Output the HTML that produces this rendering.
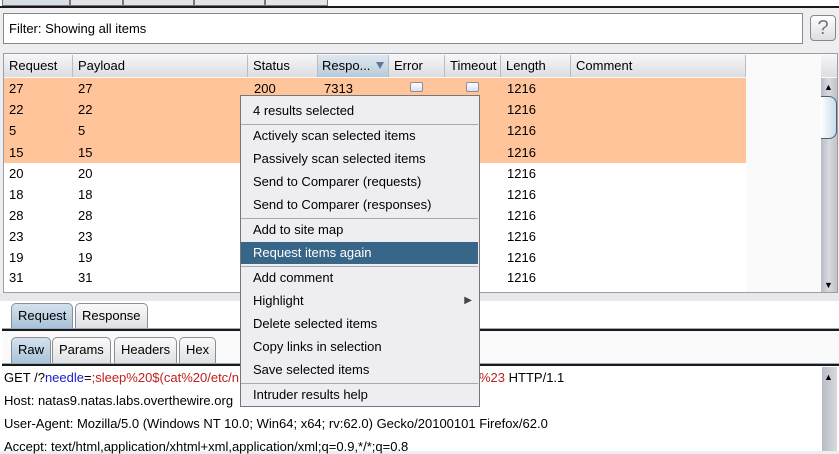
<!DOCTYPE html>
<html><head><style>
*{margin:0;padding:0;box-sizing:border-box}
body{width:839px;height:451px;overflow:hidden;background:#eeeef0;font-family:"Liberation Sans",sans-serif;font-size:13px;color:#000;position:relative}
.a{position:absolute}
.hd{position:absolute;top:55px;height:22px;background:linear-gradient(#f6f6f8,#dcdde2);border-right:1px solid #b8bcc4;padding:3px 5px;white-space:nowrap;overflow:hidden}
.row{position:absolute;left:4px;width:742px;height:21px}
.row span{position:absolute;top:3px}
.cb{position:absolute;width:13px;height:10px;border:1px solid #8a8e96;border-radius:2px;background:linear-gradient(#fff,#dde);top:-1px}
.mi{position:absolute;left:241px;width:237px;height:23px;padding:4px 12px;font-size:13px}
.sep{position:absolute;left:241px;width:237px;height:1px;background:#a8a8ad}
.tab{position:absolute;border:1px solid #8a8e96;border-bottom:none;border-radius:5px 5px 0 0;background:linear-gradient(#fafafa,#dfe0e4);padding:4px 6px}
.sel{background:linear-gradient(#d4e2ee,#a8c2d8)}
.ln{position:absolute;left:4px;font-size:13px;white-space:nowrap}
</style></head><body>
<div class="a" style="left:0;top:0;width:839px;height:6px;background:#fff"></div>
<div class="a" style="left:2px;top:0;width:68px;height:6px;background:#d4dfe8;border:1px solid #777;border-top:none"></div>
<div class="a" style="left:70px;top:0;width:53px;height:6px;background:#e4e4e8;border:1px solid #777;border-top:none"></div>
<div class="a" style="left:123px;top:0;width:71px;height:6px;background:#e4e4e8;border:1px solid #777;border-top:none"></div>
<div class="a" style="left:194px;top:0;width:71px;height:6px;background:#e4e4e8;border:1px solid #777;border-top:none"></div>
<div class="a" style="left:265px;top:0;width:63px;height:6px;background:#e4e4e8;border:1px solid #777;border-top:none"></div>
<div class="a" style="left:0;top:6px;width:839px;height:2px;background:#1a1a1a"></div>
<div class="a" style="left:3px;top:13px;width:800px;height:31px;background:#fff;border:1px solid #888;padding:7px 5px">Filter: Showing all items</div>
<div class="a" style="left:810px;top:15px;width:26px;height:26px;border:1px solid #888;border-radius:4px;background:linear-gradient(#fff,#dcdde2);color:#777;font-size:20px;text-align:center;line-height:24px">?</div>
<div class="a" style="left:3px;top:53px;width:835px;height:240px;background:#fafafa;border:1px solid #9a9ea6"></div>
<div class="hd" style="left:4px;width:69px">Request</div>
<div class="hd" style="left:73px;width:175px">Payload</div>
<div class="hd" style="left:248px;width:70px">Status</div>
<div class="hd" style="left:318px;width:71px;background:linear-gradient(#dfe8f0,#b8cadb);padding-left:4px">Respo...</div>
<svg class="a" style="left:376px;top:62px" width="8" height="7"><path d="M0 0H8L4 7Z" fill="#5a7a9a"/></svg>
<div class="hd" style="left:389px;width:56px">Error</div>
<div class="hd" style="left:445px;width:56px">Timeout</div>
<div class="hd" style="left:501px;width:70px">Length</div>
<div class="hd" style="left:571px;width:175px">Comment</div>
<div class="a" style="left:746px;top:55px;width:75px;height:237px;background:#fafafa"></div>
<div class="a" style="left:821px;top:55px;width:16px;height:22px;background:linear-gradient(#f6f6f8,#dcdde2)"></div>
<div class="a" style="left:821px;top:78px;width:16px;height:214px;background:linear-gradient(90deg,#b8bcc4,#d8dade 50%,#c0c2c8)"></div>
<div class="a" style="left:824px;top:82px;font-size:9px">▲</div>
<div class="a" style="left:824px;top:280px;font-size:9px">▼</div>
<div class="a" style="left:821px;top:96px;width:16px;height:43px;background:linear-gradient(90deg,#fff,#c8dcea);border:1px solid #4a6070;border-left:none;border-radius:0 8px 8px 0"></div>
<div class="a" style="left:4px;top:78px;width:742px;height:85px;background:#ffc499"></div>
<div class="a" style="left:4px;top:163px;width:742px;height:129px;background:#fff"></div>
<div class="row" style="top:78px"><span style="left:5px">27</span><span style="left:74px">27</span><span style="left:250px">200</span><span style="left:320px">7313</span><div class="cb" style="left:406px;top:4px"></div><div class="cb" style="left:462px;top:4px"></div><span style="left:503px">1216</span></div>
<div class="row" style="top:99px"><span style="left:5px">22</span><span style="left:74px">22</span><span style="left:503px">1216</span></div>
<div class="row" style="top:120px"><span style="left:5px">5</span><span style="left:74px">5</span><span style="left:503px">1216</span></div>
<div class="row" style="top:142px"><span style="left:5px">15</span><span style="left:74px">15</span><span style="left:503px">1216</span></div>
<div class="row" style="top:163px"><span style="left:5px">20</span><span style="left:74px">20</span><span style="left:503px">1216</span></div>
<div class="row" style="top:184px"><span style="left:5px">18</span><span style="left:74px">18</span><span style="left:503px">1216</span></div>
<div class="row" style="top:205px"><span style="left:5px">28</span><span style="left:74px">28</span><span style="left:503px">1216</span></div>
<div class="row" style="top:226px"><span style="left:5px">23</span><span style="left:74px">23</span><span style="left:503px">1216</span></div>
<div class="row" style="top:247px"><span style="left:5px">19</span><span style="left:74px">19</span><span style="left:503px">1216</span></div>
<div class="row" style="top:267px"><span style="left:5px">31</span><span style="left:74px">31</span><span style="left:503px">1216</span></div>

<div class="a" style="left:0;top:293px;width:839px;height:158px;background:#fff"></div>
<div class="a" style="left:0;top:293px;width:839px;height:8px;background:#e8e8ec"></div>
<div class="tab sel" style="left:11px;top:303px;height:25px">Request</div>
<div class="tab" style="left:75px;top:303px;height:25px">Response</div>
<div class="a" style="left:2px;top:328px;width:837px;height:3px;background:#1a1a1a;border-top:1px solid #9ab"></div>
<div class="a" style="left:2px;top:331px;width:837px;height:33px;background:#fafafa"></div>
<div class="tab sel" style="left:11px;top:337px;height:27px">Raw</div>
<div class="tab" style="left:52px;top:337px;height:27px">Params</div>
<div class="tab" style="left:114px;top:337px;height:27px">Headers</div>
<div class="tab" style="left:179px;top:337px;height:27px">Hex</div>
<div class="a" style="left:2px;top:363px;width:837px;height:3px;background:#1a1a1a;border-top:1px solid #9ab"></div>
<div class="ln" style="top:370px">GET /?<span style="color:#1b1bd0">needle</span>=<span style="color:#c02020">;sleep%20$(cat%20/etc/n</span></div>
<div class="ln" style="left:479px;top:370px"><span style="color:#c02020">%23</span> HTTP/1.1</div>
<div class="ln" style="top:393px">Host: natas9.natas.labs.overthewire.org</div>
<div class="ln" style="top:416px">User-Agent: Mozilla/5.0 (Windows NT 10.0; Win64; x64; rv:62.0) Gecko/20100101 Firefox/62.0</div>
<div class="ln" style="top:439px">Accept: text/html,application/xhtml+xml,application/xml;q=0.9,*/*;q=0.8</div>
<div class="a" style="left:822px;top:367px;width:15px;height:84px;background:linear-gradient(90deg,#b8bcc4,#d8dade)"></div>
<div class="a" style="left:824px;top:372px;font-size:9px">▲</div>

<div class="a" style="left:240px;top:95px;width:240px;height:312px;background:#eeeef2;border:1px solid #777"></div>
<div class="mi" style="top:99px">4 results selected</div>
<div class="sep" style="top:124px"></div>
<div class="mi" style="top:124px">Actively scan selected items</div>
<div class="mi" style="top:147px">Passively scan selected items</div>
<div class="mi" style="top:170px">Send to Comparer (requests)</div>
<div class="mi" style="top:193px">Send to Comparer (responses)</div>
<div class="sep" style="top:218px"></div>
<div class="mi" style="top:218px">Add to site map</div>
<div class="mi" style="top:242px;height:22px;background:#386688;color:#fff;padding-top:3px">Request items again</div>
<div class="sep" style="top:266px"></div>
<div class="mi" style="top:266px">Add comment</div>
<div class="mi" style="top:289px">Highlight<span style="position:absolute;right:6px;font-size:10px;top:6px;color:#444">▶</span></div>
<div class="mi" style="top:312px">Delete selected items</div>
<div class="mi" style="top:335px">Copy links in selection</div>
<div class="mi" style="top:358px">Save selected items</div>
<div class="sep" style="top:383px"></div>
<div class="mi" style="top:383px">Intruder results help</div>
</body></html>
